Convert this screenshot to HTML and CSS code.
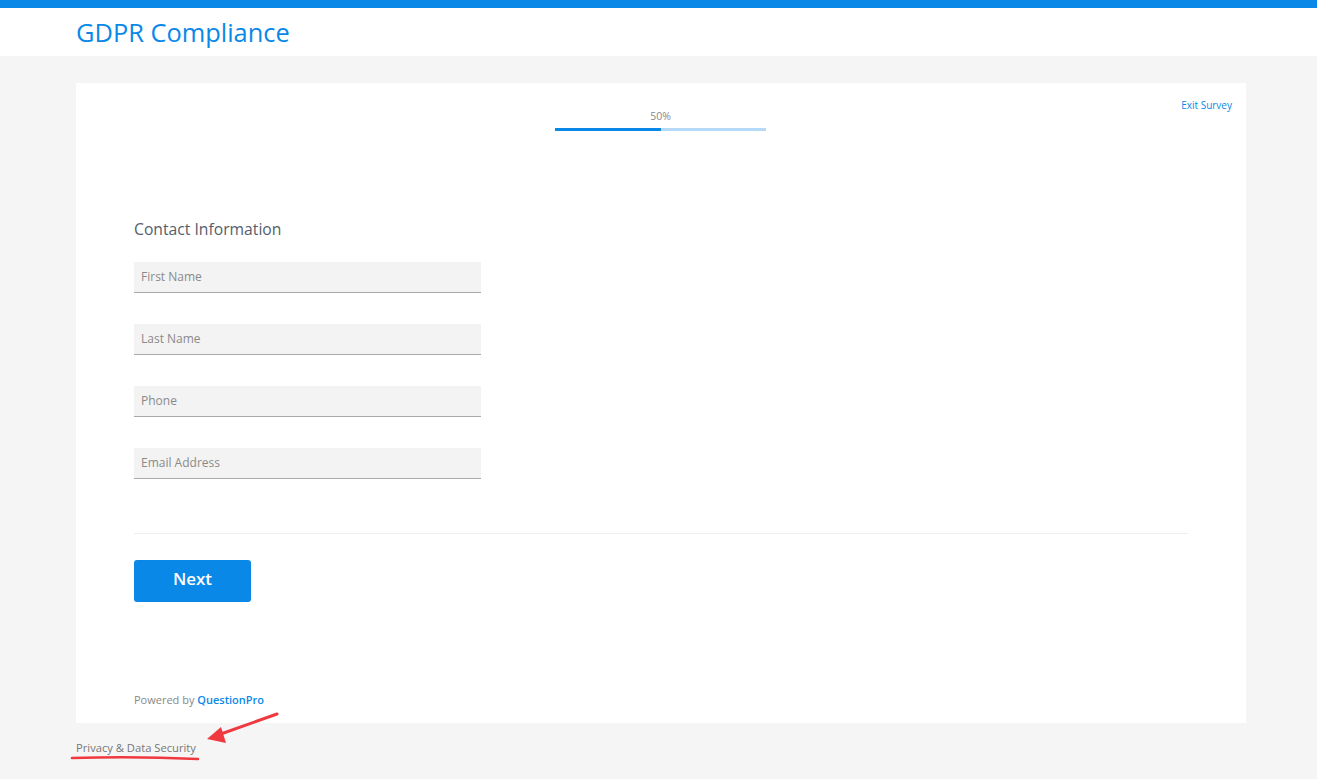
FILE: index.html
```
<!DOCTYPE html>
<html lang="en">
<head>
    <meta name='viewport' content='width=device-width, initial-scale=1'>
    <link rel="stylesheet" href="styles.css">
    <title>GDPR Compliance</title>
</head>
<body>
<header class="topBar"><h1 class="title">GDPR Compliance</h1></header>
<main class="page">
    <section class="card">
        <div class="cardTop">
            <div class="progress">
                <span class="progressLabel">50%</span>
                <div class="progressTrack"><div class="progressFill" style="width: 50%"></div></div>
            </div>
            <a class="exitLink" href="#">Exit Survey</a>
        </div>
        <form class="survey">
            <h2 class="question">Contact Information</h2>
            <input class="field" type="text" placeholder="First Name">
            <input class="field" type="text" placeholder="Last Name">
            <input class="field" type="text" placeholder="Phone">
            <input class="field" type="text" placeholder="Email Address">
            <hr class="divider">
            <button class="btnNext" type="button">Next</button>
        </form>
        <p class="powered">Powered by <a href="#">QuestionPro</a></p>
    </section>
    <a class="privacy" href="#">Privacy &amp; Data Security</a>
</main>

<!-- annotation drawn over the page -->
<svg class="markup" width="1317" height="779" viewBox="0 0 1317 779">
    <path d="M72 758 Q135 756 198 759" stroke="#f0393f" stroke-width="2.5" fill="none" stroke-linecap="round"/>
    <path d="M277 714 L218 735" stroke="#f0393f" stroke-width="3" fill="none" stroke-linecap="round"/>
    <path d="M207 739 L221 727 L226 743 Z" fill="#f0393f"/>
</svg>
</body>
</html>
```
FILE: styles.css
```
/* @formatter:off */
html, body { margin: 0; padding: 0; font-family: "Open Sans", "Noto Sans", sans-serif; background: #f5f5f5; }
body { min-height: 779px; position: relative; }
.topBar { background: #fff; border-top: 8px solid #0a88e8; height: 48px; padding: 0 76px; box-sizing: content-box; }
.title { margin: 0; font-weight: 400; font-size: 25.4px; line-height: 48px; color: #0a88e8; }
.page { padding: 27px 71px 0 76px; }
.card { background: #fff; height: 640px; box-sizing: border-box; padding: 0 58px; display: flex; flex-direction: column; }
.cardTop { height: 130px; position: relative; margin: 0 -58px; }
.progress { position: absolute; left: 479px; top: 26px; width: 211px; text-align: center; }
.progressLabel { display: block; font-size: 10.5px; color: #888; line-height: 14px; }
.progressTrack { height: 3px; background: #b5d9f8; margin-top: 5px; }
.progressFill { height: 3px; background: #0a88e8; }
.exitLink { position: absolute; right: 14px; top: 15px; font-size: 10px; color: #0a88e8; text-decoration: none; }
.survey { display: flex; flex-direction: column; align-items: flex-start; }
.question { margin: 0 0 21px; padding-top: 4px; font-size: 15.7px; font-weight: 400; color: #545e6b; line-height: 24px; }
.field { width: 347px; height: 31px; box-sizing: border-box; margin: 0 0 31px; border: 0; border-bottom: 1px solid #aaa; background: #f3f3f3; padding: 0 7px 1px; font-family: inherit; font-size: 12px; color: #333; outline: none; }
.field::placeholder { color: #8a8a8a; }
.divider { align-self: stretch; margin: 23px 0 26px; border: 0; border-top: 1px solid #eee; }
.btnNext { width: 117px; height: 42px; border: 0; border-radius: 3px; background: #0a88e8; color: #fff; font-family: inherit; font-weight: 600; font-size: 17px; line-height: 38px; padding: 0 0 4px; cursor: pointer; }
.powered { margin: auto 0 16px; font-size: 11px; color: #888; }
.powered a { color: #0a88e8; font-weight: 600; text-decoration: none; }
.privacy { display: inline-block; margin-top: 17px; font-size: 11.2px; color: #777; text-decoration: none; }
.markup { position: absolute; left: 0; top: 0; pointer-events: none; }
/* @formatter:on */
```
